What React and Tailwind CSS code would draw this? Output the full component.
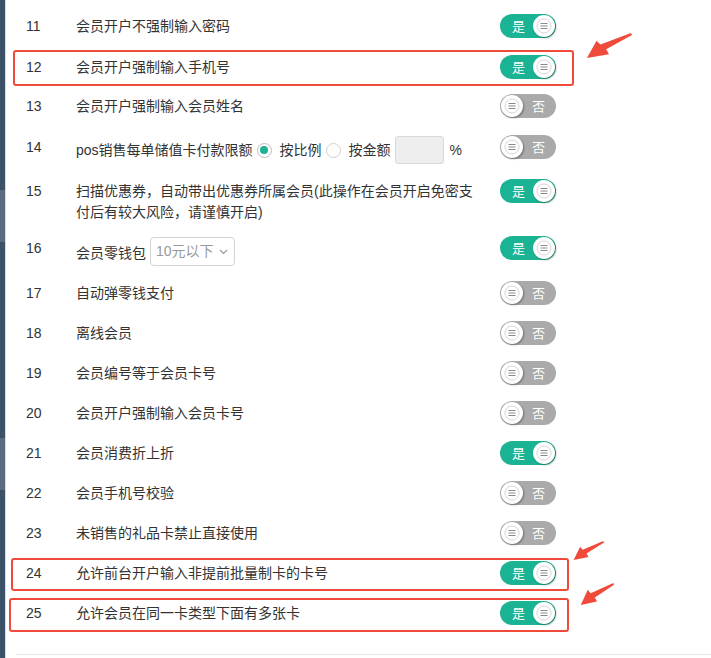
import React from 'react';

const rows = [
  { no: 11, text: '会员开户不强制输入密码', on: true, h: 'h-[41px]' },
  { no: 12, text: '会员开户强制输入手机号', on: true, h: 'h-[39px]' },
  { no: 13, text: '会员开户强制输入会员姓名', on: false, h: 'h-[41px]' },
  { no: 14, kind: 'limit', on: false, h: 'h-[44px]' },
  { no: 15, kind: 'coupon', on: true, h: 'h-[57px]' },
  { no: 16, kind: 'wallet', on: true, h: 'h-[45px]' },
  { no: 17, text: '自动弹零钱支付', on: false, h: 'h-[40px]' },
  { no: 18, text: '离线会员', on: false, h: 'h-[40px]' },
  { no: 19, text: '会员编号等于会员卡号', on: false, h: 'h-[40px]' },
  { no: 20, text: '会员开户强制输入会员卡号', on: false, h: 'h-[40px]' },
  { no: 21, text: '会员消费折上折', on: true, h: 'h-[40px]' },
  { no: 22, text: '会员手机号校验', on: false, h: 'h-[40px]' },
  { no: 23, text: '未销售的礼品卡禁止直接使用', on: false, h: 'h-[40px]' },
  { no: 24, text: '允许前台开户输入非提前批量制卡的卡号', on: true, h: 'h-[40px]' },
  { no: 25, text: '允许会员在同一卡类型下面有多张卡', on: true, h: 'h-[40px]' },
];

const Knob = () => (
  <span className="flex h-[22px] w-[22px] items-center justify-center rounded-full bg-white shadow-[1px_1px_2px_rgba(0,0,0,0.35)]">
    <svg width="16" height="16" viewBox="0 0 16 16">
      <circle cx="8" cy="8" r="7" fill="none" stroke="#d6d6d6" strokeWidth="1" />
      <path d="M4.5 5.5h7M4.5 8h7M4.5 10.5h7" stroke="#8a8a8a" strokeWidth="1.1" />
    </svg>
  </span>
);

const Toggle = ({ on }) =>
  on ? (
    <div className="flex h-[24px] w-[56px] items-center justify-between rounded-full bg-[#1ab394] pl-[12px] pr-[1px]">
      <span className="text-[13px] leading-none text-white">是</span>
      <Knob />
    </div>
  ) : (
    <div className="flex h-[24px] w-[56px] items-center justify-between rounded-full bg-[#aaaaaa] pl-[1px] pr-[11px]">
      <Knob />
      <span className="text-[13px] leading-none text-white">否</span>
    </div>
  );

const Radio = ({ checked }) => (
  <span
    className={`mx-[4px] flex h-[15px] w-[15px] items-center justify-center rounded-full border bg-white ${
      checked ? 'border-[#bdbdbd]' : 'border-[#d0d0d0]'
    }`}
  >
    {checked && <span className="h-[8px] w-[8px] rounded-full bg-[#1ab394]" />}
  </span>
);

const Label = ({ row }) => {
  if (row.kind === 'limit') {
    return (
      <div className="mt-[9px] flex h-[28px] items-center">
        <span>pos销售每单储值卡付款限额</span>
        <Radio checked />
        <span className="ml-[4px]">按比例</span>
        <Radio />
        <span className="ml-[4px]">按金额</span>
        <span className="ml-[4px] h-[28px] w-[49px] rounded-[3px] border border-[#d9d9d9] bg-[#eeeeee]" />
        <span className="ml-[6px]">%</span>
      </div>
    );
  }
  if (row.kind === 'coupon') {
    return (
      <div className="pt-[10px] leading-[21px]">
        扫描优惠券，自动带出优惠券所属会员(此操作在会员开启免密支
        <br />
        付后有较大风险，请谨慎开启)
      </div>
    );
  }
  if (row.kind === 'wallet') {
    return (
      <div className="mt-[9px] flex h-[29px] items-center">
        <span className="mt-[4px]">会员零钱包</span>
        <div className="ml-[4px] flex h-[29px] w-[85px] items-center justify-between rounded-[4px] border border-[#d4d4d4] bg-white pl-[5px] pr-[6px]">
          <span className="text-[#999]">10元以下</span>
          <svg width="9" height="6" viewBox="0 0 9 6">
            <path d="M1 1l3.5 3.5L8 1" fill="none" stroke="#999" strokeWidth="1.2" />
          </svg>
        </div>
      </div>
    );
  }
  return <div className="pt-[10px] leading-[20px]">{row.text}</div>;
};

// red annotation arrow, pointing down-left
const Arrow = ({ className, w, h }) => (
  <svg className={`absolute ${className}`} width={w} height={h} viewBox="0 0 48 26" preserveAspectRatio="none">
    <polygon points="47,0 48,2 21,17 24,22 1,26 11,8 15,12" fill="#f04a3b" />
  </svg>
);

export default function App() {
  return (
    <div
      className="relative flex h-[658px] w-[711px] overflow-hidden bg-white text-[14px] text-[#333]"
      style={{ fontFamily: '"Liberation Sans", "Noto Sans CJK SC", sans-serif' }}
    >
      <div className="flex w-[5px] flex-col">
        <div className="h-[190px] bg-[#3a5168]" />
        <div className="h-[52px] bg-[#5a6c80]" />
        <div className="h-[196px] bg-[#3a5168]" />
        <div className="h-[52px] bg-[#5a6c80]" />
        <div className="flex-1 bg-[#3a5168]" />
      </div>
      <div className="w-px bg-[#d4dde6]" />
      <div className="flex-1 pt-[6px]">
        {rows.map((row) => (
          <div key={row.no} className={`flex ${row.h}`}>
            <div className="w-[70px] pl-[20px] pt-[10px] leading-[20px]">{row.no}</div>
            <div className="w-[424px]">
              <Label row={row} />
            </div>
            <div className="pt-[8px]">
              <Toggle on={row.on} />
            </div>
          </div>
        ))}
        <div className="ml-[10px] mt-[21px] h-px bg-[#e5e5e5]" />
      </div>

      {/* annotations */}
      <div className="absolute left-[13px] top-[50px] h-[36px] w-[561px] rounded-[3px] border-2 border-[#f04a3b]" />
      <div className="absolute left-[11px] top-[558px] h-[33px] w-[558px] rounded-[3px] border-2 border-[#f04a3b]" />
      <div className="absolute left-[9px] top-[598px] h-[34px] w-[560px] rounded-[3px] border-2 border-[#f04a3b]" />
      <Arrow className="left-[586px] top-[33px]" w={46} h={25} />
      <Arrow className="left-[573px] top-[541px]" w={31} h={19} />
      <Arrow className="left-[580px] top-[583px]" w={34} h={22} />
    </div>
  );
}
